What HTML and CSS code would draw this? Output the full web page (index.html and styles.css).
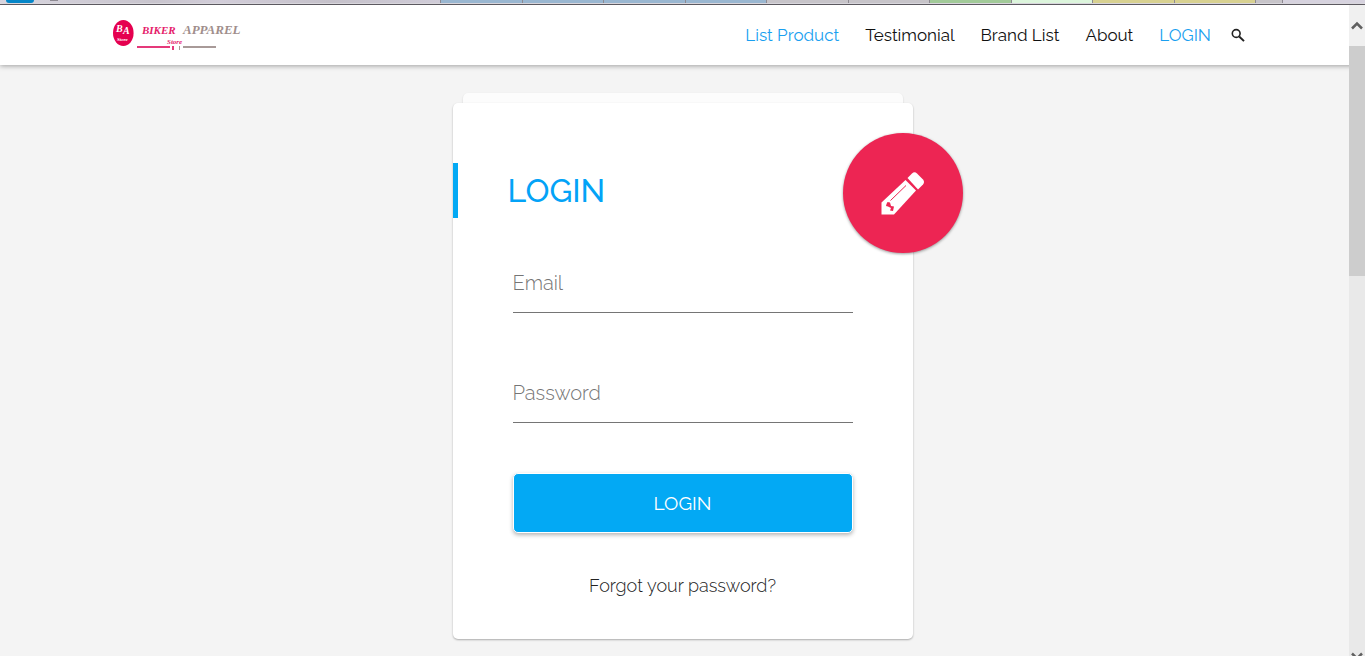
FILE: index.html
```html
<!DOCTYPE html>
<html lang="en">
<head>
  <meta charset="UTF-8">
  <meta name="viewport" content="width=device-width, initial-scale=1.0">
  <title>Biker Apparel Store - Login</title>
  <link rel="stylesheet" href="styles.css">
</head>
<body>
  <div class="tabs">
    <span class="tab tab-first"><i class="tab-start"></i><i class="tab-dot"></i></span>
    <span class="tab blue"></span>
    <span class="tab blue"></span>
    <span class="tab blue"></span>
    <span class="tab blue"></span>
    <span class="tab grey"></span>
    <span class="tab grey"></span>
    <span class="tab green"></span>
    <span class="tab mint"></span>
    <span class="tab yellow"></span>
    <span class="tab yellow"></span>
    <span class="tab grey tab-new"></span>
    <span class="tab tab-last"></span>
  </div>

  <header class="header">
    <a class="logo" href="#" aria-label="Biker Apparel Store">
      <svg width="130" height="34" viewBox="0 0 130 34">
        <ellipse cx="11.3" cy="15" rx="10.3" ry="13" fill="#e5004f"/>
        <g class="logo-text" fill="#fff">
          <text x="4" y="14" font-size="10">B</text>
          <text x="11" y="16" font-size="10">A</text>
          <text x="5" y="23" font-size="5">Store</text>
        </g>
        <g class="logo-text">
          <text x="30" y="16" font-size="11" fill="#e5206a">BIKER</text>
          <text x="71" y="16" font-size="13" fill="#a08e8c">APPAREL</text>
          <text x="55" y="26" font-size="7" fill="#e5206a">Store</text>
        </g>
        <path d="M25 29h33M61 28v4" stroke="#e5397a" stroke-width="2"/>
        <path d="M67.500 28v4" stroke="#a89a98" stroke-width="1"/>
        <path d="M71 29h33" stroke="#a89a98" stroke-width="2"/>
      </svg>
    </a>
    <nav class="nav">
      <a class="active" href="#">List Product</a>
      <a href="#">Testimonial</a>
      <a href="#">Brand List</a>
      <a href="#">About</a>
      <a class="active" href="#">LOGIN</a>
      <button class="search" type="button" aria-label="Search">
        <svg width="14" height="14" viewBox="0 0 14 14" fill="none" stroke="#222">
          <circle cx="5.200" cy="5.500" r="3.900" stroke-width="1.600"/>
          <path d="M8.200 8.500l4.800 4.600" stroke-width="2"/>
        </svg>
      </button>
    </nav>
  </header>

  <main class="container">
    <div class="sheet"></div>
    <div class="card">
      <button class="toggle" type="button" aria-label="Register">
        <svg width="44" height="44" viewBox="0 0 44 44">
          <path d="M24.500 9L35 19.500 13 43.500H.5V31.500z" fill="#fff"/>
          <path d="M26.500 7L31 2.500Q33.500.2 36 2.500L42 8.500Q44 11 42 13.500L37 18.500z" fill="#fff"/>
          <path d="M9.500 29.500L25 14.500" stroke="#ed2553" stroke-width="1"/>
          <path d="M6.500 31l2.500.5 1 3.500 3 .5-1 4.500-3-.5 1-2.500-3-1.500-2-.5.5-2z" fill="#ed2553"/>
        </svg>
      </button>
      <h1 class="title">LOGIN</h1>
      <form>
        <div class="field">
          <input type="email" id="email" placeholder="Email" aria-label="Email">
        </div>
        <div class="field">
          <input type="password" id="password" placeholder="Password" aria-label="Password">
        </div>
        <button class="btn" type="submit">LOGIN</button>
        <a class="forgot" href="#">Forgot your password?</a>
      </form>
    </div>
  </main>

  <div class="scrollbar">
    <svg class="arrow" width="12" height="9" viewBox="0 0 12 9"><path d="M1 7.500l5-5 5 5" fill="none" stroke="#606060" stroke-width="2.500"/></svg>
    <div class="thumb"></div>
    <svg class="arrow arrow-down" width="12" height="9" viewBox="0 0 12 9"><path d="M1 1.500l5 5 5-5" fill="none" stroke="#606060" stroke-width="2.500"/></svg>
  </div>
</body>
</html>
```
FILE: styles.css
```css
* {
  box-sizing: border-box;
}
body {
  margin: 0;
  height: 100vh;
  overflow: hidden;
  background: #f4f4f4;
  font-family: Raleway, Lato, sans-serif;
  color: #111;
}
a {
  color: inherit;
  text-decoration: none;
}
button {
  font-family: inherit;
  cursor: pointer;
}

/* tab strip */
.tabs {
  display: flex;
  height: 5px;
  border-bottom: 1px solid #67636b;
  background: #e6e4ea;
  padding-bottom: 1px;
}
.tab {
  flex: 161 1 0;
  border-left: 1px solid #8e8a92;
  background: #cdc9d3;
}
.tab-first {
  flex-grow: 868;
  display: flex;
  gap: 16px;
  padding-left: 6px;
  border-left: none;
  background: linear-gradient(to right, #d8d5df, #c8c4cd 35%, #d2cdd9 50%, #c5c1ca 75%, #d0ccd8);
}
.tab-start {
  width: 28px;
  border-radius: 0 0 5px 5px;
  background: #0586c8;
}
.tab-dot {
  width: 8px;
  height: 1px;
  background: #8e8a92;
}
.tab-new {
  flex-grow: 52;
}
.tab-last {
  flex-grow: 164;
  background: #d6d2de;
}
.blue { background: #9ab7d1; }
.grey { background: #c7c4c9; }
.green { background: #a2ca99; }
.mint { background: #dcf5dc; }
.yellow { background: #d8d191; }

/* header */
.header {
  display: flex;
  justify-content: space-between;
  align-items: center;
  height: 60px;
  padding: 0 120px 0 112px;
  background: #fff;
  box-shadow: 0 1px 5px rgba(0, 0, 0, 0.35);
}
.logo svg {
  display: block;
}
.logo-text {
  font-family: "Liberation Serif", serif;
  font-weight: bold;
  font-style: italic;
}
.nav {
  display: flex;
  align-items: center;
  gap: 26px;
  font-size: 17px;
  line-height: 24px;
}
.active {
  color: #1a9ff0;
}
.search {
  margin-left: -6px;
  padding: 0;
  border: none;
  background: none;
}
.search svg {
  display: block;
}

/* login card */
.container {
  width: 460px;
  margin: 28px auto 0;
}
.sheet {
  height: 10px;
  margin: 0 10px;
  border-radius: 5px 5px 0 0;
  background: #fcfcfc;
  box-shadow: 0 1px 2px rgba(0, 0, 0, 0.15);
}
.card {
  position: relative;
  padding: 60px 0 40px;
  border-radius: 5px;
  background: #fff;
  box-shadow: 0 1px 2px rgba(0, 0, 0, 0.3);
}
.title {
  margin: 0 0 35px;
  padding-left: 50px;
  border-left: 5px solid #03a9f4;
  color: #03a3f7;
  font-size: 32px;
  font-weight: 500;
  line-height: 55px;
}
form {
  padding: 0 60px;
}
.field {
  margin-bottom: 50px;
}
.field input {
  display: block;
  width: 100%;
  height: 60px;
  padding: 0;
  border: none;
  border-bottom: 1px solid #757575;
  outline: none;
  background: none;
  font-family: inherit;
  font-size: 20px;
  font-weight: 300;
}
.field input::placeholder {
  color: #757575;
}
.btn {
  display: block;
  width: 100%;
  height: 60px;
  border: 1px solid #fff;
  border-radius: 5px;
  background: #03a9f4;
  box-shadow: 0 2px 4px rgba(0, 0, 0, 0.3);
  color: #fff;
  font-size: 19px;
}
.forgot {
  display: block;
  margin-top: 40px;
  color: #222;
  font-size: 18px;
  font-weight: 300;
  line-height: 26px;
  text-align: center;
}
.toggle {
  position: absolute;
  top: 30px;
  right: -50px;
  display: flex;
  align-items: center;
  justify-content: center;
  width: 120px;
  height: 120px;
  padding: 0;
  border: none;
  border-radius: 50%;
  background: #ed2553;
  box-shadow: 0 1px 3px rgba(0, 0, 0, 0.4);
}

/* scrollbar over the page edge */
.scrollbar {
  position: fixed;
  top: 5px;
  right: 0;
  bottom: 0;
  display: flex;
  flex-direction: column;
  align-items: center;
  width: 16px;
  overflow: hidden;
  padding-top: 16px;
  background: linear-gradient(#f0f0f0 41px, #e9e9e9 41px);
}
.arrow {
  flex: none;
}
.thumb {
  flex: none;
  width: 100%;
  height: 230px;
  margin-top: 16px;
  background: #cdcdcd;
}
.arrow-down {
  margin: auto 0 -5px;
}
```
